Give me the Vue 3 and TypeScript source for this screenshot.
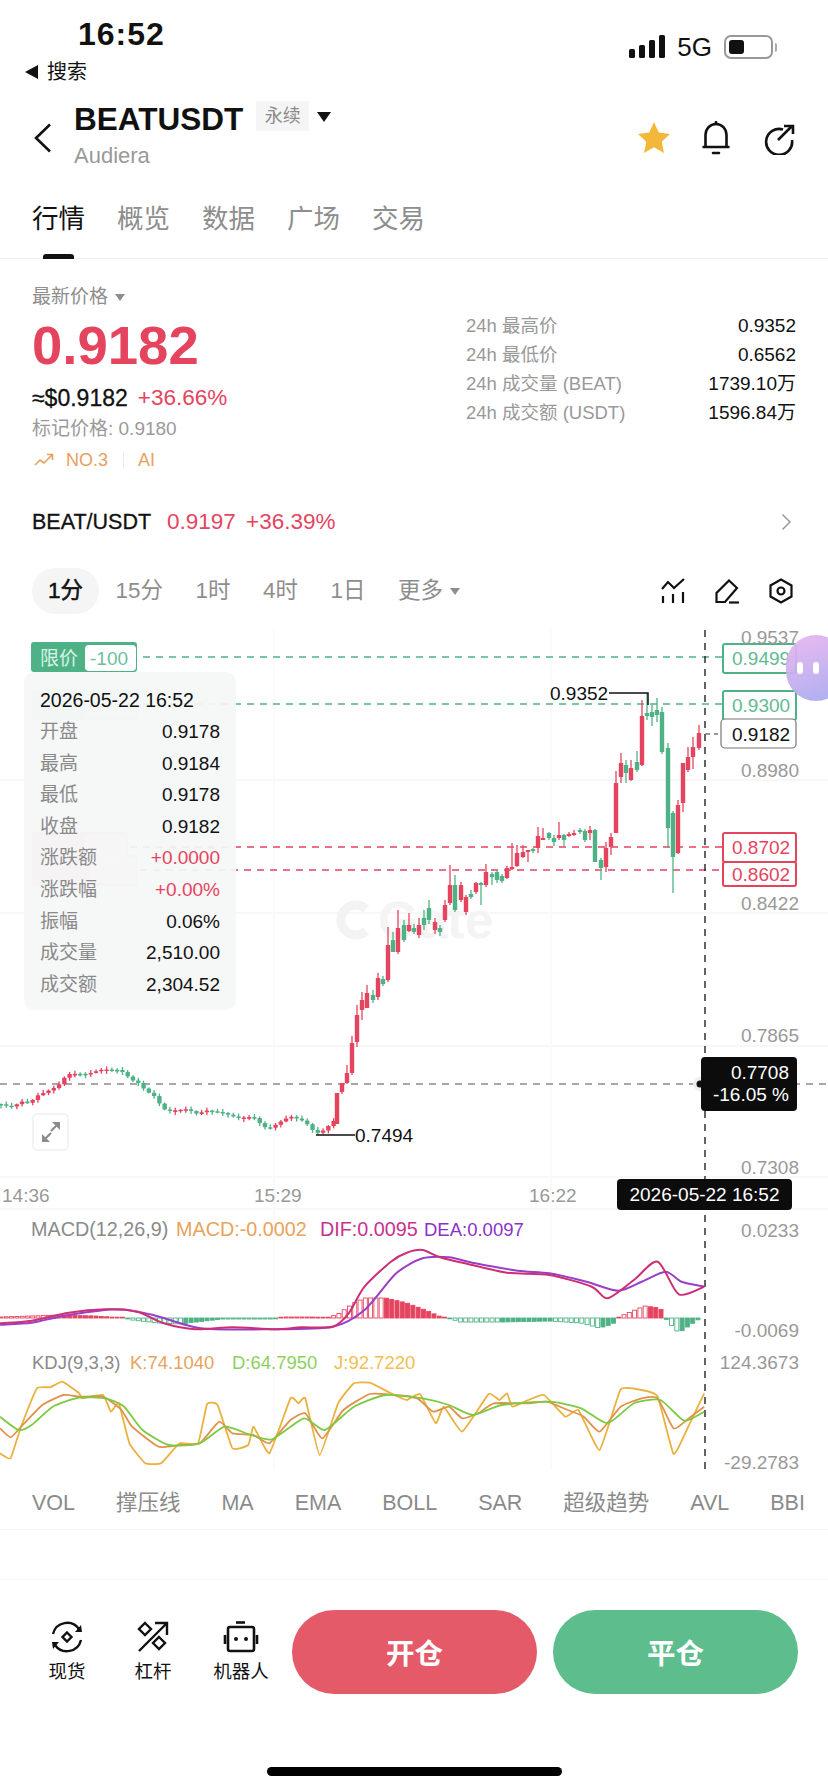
<script setup lang="ts">
type Pt = [number, number]
type Candle = { x: number; top: number; h: number; hi: number; lo: number; up: boolean }

const UP = '#e5445f'
const DOWN = '#4fb286'

const tabs = ['行情', '概览', '数据', '广场', '交易']
const stats = [
  ['24h 最高价', '0.9352'],
  ['24h 最低价', '0.6562'],
  ['24h 成交量 (BEAT)', '1739.10万'],
  ['24h 成交额 (USDT)', '1596.84万'],
]
const frames = ['15分', '1时', '4时', '1日']
const indicators = ['VOL', '撑压线', 'MA', 'EMA', 'BOLL', 'SAR', '超级趋势', 'AVL', 'BBI']
const tipRows = [
  { k: '开盘', v: '0.9178', up: false },
  { k: '最高', v: '0.9184', up: false },
  { k: '最低', v: '0.9178', up: false },
  { k: '收盘', v: '0.9182', up: false },
  { k: '涨跌额', v: '+0.0000', up: true },
  { k: '涨跌幅', v: '+0.00%', up: true },
  { k: '振幅', v: '0.06%', up: false },
  { k: '成交量', v: '2,510.00', up: false },
  { k: '成交额', v: '2,304.52', up: false },
]
const axisLabels: [string, number][] = [
  ['0.9537', 644], ['0.8980', 777], ['0.8422', 910], ['0.7865', 1042], ['0.7308', 1174],
  ['0.0233', 1237], ['-0.0069', 1337], ['124.3673', 1369], ['-29.2783', 1469],
]
const gridY = [780, 913, 1046, 1177, 1209]
const gridX = [274, 551]

function interp(pts: Pt[], x: number): number {
  for (let i = 1; i < pts.length; i++) {
    if (x <= pts[i][0]) {
      const [x0, y0] = pts[i - 1]
      const [x1, y1] = pts[i]
      return y0 + ((y1 - y0) * (x - x0)) / (x1 - x0)
    }
  }
  return pts[pts.length - 1][1]
}

const early: Pt[] = [
  [0, 1104], [10, 1106], [15, 1105], [20, 1100], [30, 1102], [36, 1095], [47, 1091], [57, 1087], [62, 1082],
  [67, 1075], [87, 1075], [103, 1069], [118, 1069], [125, 1072], [130, 1078], [140, 1083], [145, 1090],
  [155, 1097], [160, 1105], [166, 1112], [172, 1112], [187, 1110], [197, 1114], [207, 1110], [220, 1111],
  [238, 1117], [253, 1117], [263, 1127], [268, 1130], [274, 1127], [290, 1117], [305, 1121], [311, 1128],
  [317, 1132], [326, 1128], [332, 1120],
]

// x, open, close, high, low
const traced: [number, number, number, number, number][] = [
  [337, 1124, 1093, 1093, 1124], [342, 1092, 1083, 1083, 1094], [347, 1083, 1073, 1065, 1084],
  [352, 1073, 1043, 1036, 1075], [357, 1042, 1015, 1005, 1047], [362, 1010, 1000, 992, 1020],
  [367, 1008, 993, 985, 1008], [373, 995, 1000, 990, 1003], [378, 997, 978, 973, 1000],
  [383, 979, 984, 976, 986], [388, 980, 945, 927, 982], [393, 940, 952, 932, 952],
  [398, 952, 928, 910, 954], [404, 925, 940, 920, 942], [409, 931, 925, 913, 932],
  [414, 928, 932, 924, 934], [419, 935, 925, 918, 938], [424, 918, 925, 910, 930],
  [429, 908, 920, 900, 924], [435, 930, 922, 918, 934], [440, 928, 932, 925, 936],
  [445, 920, 905, 900, 922], [450, 903, 885, 865, 905], [455, 885, 910, 875, 912],
  [461, 900, 885, 882, 902], [466, 912, 897, 895, 915], [471, 894, 897, 890, 899],
  [476, 892, 883, 882, 894], [481, 883, 885, 882, 905], [486, 885, 872, 864, 887],
  [492, 874, 877, 872, 885], [497, 872, 880, 870, 883], [502, 876, 881, 874, 883],
  [507, 878, 868, 866, 879], [512, 869, 867, 843, 870], [517, 866, 853, 845, 867],
  [523, 857, 852, 845, 858], [528, 852, 850, 850, 862], [533, 849, 851, 848, 853],
  [538, 848, 836, 827, 853], [543, 840, 838, 828, 840], [549, 833, 838, 832, 840],
  [554, 838, 842, 835, 846], [559, 838, 835, 822, 840], [564, 835, 840, 834, 846],
  [569, 836, 834, 832, 837], [574, 834, 833, 830, 836], [580, 830, 832, 828, 834],
  [585, 831, 840, 829, 842], [590, 833, 830, 826, 840], [595, 830, 862, 829, 862],
  [601, 860, 868, 858, 880], [606, 867, 848, 842, 872], [611, 847, 837, 833, 855],
  [616, 833, 783, 771, 833], [621, 777, 763, 753, 783], [626, 765, 773, 760, 783],
  [631, 780, 768, 760, 781], [637, 762, 770, 751, 772], [642, 765, 716, 700, 766],
  [647, 713, 716, 693, 720], [652, 712, 717, 705, 726], [657, 710, 715, 698, 722],
  [662, 712, 752, 707, 754], [668, 748, 828, 743, 848], [673, 813, 857, 811, 893],
  [678, 853, 805, 800, 854], [683, 803, 763, 763, 812], [688, 770, 757, 747, 772],
  [693, 757, 747, 737, 769], [699, 748, 733, 725, 750],
]

function buildCandles(): Candle[] {
  const out: Candle[] = []
  let prev = early[0][1]
  for (let i = 0; i * 5.28 < 334; i++) {
    const x = i * 5.28 + 1
    const c = interp(early, x) + Math.sin(i * 12.9) * 1.2
    const up = c < prev
    const top = Math.min(c, prev)
    const h = Math.max(Math.abs(c - prev), 1.6)
    const w1 = 0.5 + Math.abs(Math.sin(i * 7.3)) * 2.5
    const w2 = 0.5 + Math.abs(Math.cos(i * 4.1)) * 2.5
    out.push({ x, top, h, hi: top - w1, lo: top + h + w2, up })
    prev = c
  }
  for (const [x, o, c, hi, lo] of traced) {
    out.push({ x, top: Math.min(o, c), h: Math.max(Math.abs(o - c), 2), hi, lo, up: c < o })
  }
  return out
}
const candles = buildCandles()

const mapZ = (p: Pt): Pt => [p[0] / 1.893, 1230 + p[1] / 3]
function smooth(raw: Pt[], t = 0.13): string {
  const p = raw.map(mapZ)
  let d = `M${p[0][0].toFixed(1)} ${p[0][1].toFixed(1)}`
  for (let i = 0; i < p.length - 1; i++) {
    const a = p[Math.max(i - 1, 0)]
    const b = p[i]
    const c = p[i + 1]
    const e = p[Math.min(i + 2, p.length - 1)]
    d += `C${(b[0] + (c[0] - a[0]) * t).toFixed(1)} ${(b[1] + (c[1] - a[1]) * t).toFixed(1)} ${(c[0] - (e[0] - b[0]) * t).toFixed(1)} ${(c[1] - (e[1] - b[1]) * t).toFixed(1)} ${c[0].toFixed(1)} ${c[1].toFixed(1)}`
  }
  return d
}

const dif = smooth([[0,280],[60,272],[130,248],[200,238],[260,245],[310,280],[370,298],[440,292],[520,298],[570,292],[630,290],[660,250],[690,170],[740,95],[770,68],[800,60],[830,80],[880,100],[960,128],[1040,135],[1120,170],[1150,205],[1200,150],[1245,95],[1285,193],[1333,170]])
const dea = smooth([[0,284],[60,278],[130,255],[220,238],[290,255],[380,295],[510,298],[630,290],[690,240],[750,130],[800,85],[850,82],[900,100],[980,122],[1040,130],[1110,155],[1170,182],[1215,155],[1260,125],[1290,155],[1333,170]])
const kJ = smooth([[0,670],[20,685],[40,590],[70,475],[95,472],[118,455],[150,490],[155,505],[195,495],[210,545],[225,520],[245,640],[275,700],[305,700],[340,640],[375,640],[392,522],[412,525],[440,655],[470,645],[480,590],[510,670],[550,505],[565,520],[578,505],[605,675],[640,520],[670,460],[700,458],[740,490],[770,510],[795,492],[825,580],[840,530],[875,605],[925,492],[945,510],[960,490],[970,530],[1000,510],[1030,495],[1070,560],[1095,540],[1135,660],[1175,478],[1215,480],[1245,500],[1275,672],[1300,600],[1333,490]], 0.06)
const kK = smooth([[0,595],[20,622],[40,590],[80,525],[120,495],[150,500],[195,500],[230,540],[250,590],[300,650],[340,645],[378,640],[415,575],[440,610],[480,615],[510,640],[550,570],[578,550],[610,625],[650,540],[700,492],[745,495],[790,505],[820,545],[850,530],[875,565],[905,550],[935,520],[1000,520],[1035,515],[1075,540],[1105,560],[1135,605],[1175,530],[1215,505],[1245,505],[1275,595],[1300,570],[1333,530]], 0.08)
const kD = smooth([[0,560],[35,600],[60,585],[100,530],[150,503],[200,505],[235,530],[270,600],[320,645],[378,640],[425,590],[470,612],[515,628],[575,565],[615,600],[670,530],[730,495],[800,505],[850,525],[895,555],[950,525],[1040,515],[1100,535],[1150,580],[1200,520],[1250,510],[1295,572],[1333,545]], 0.1)

const histKeys: Pt[] = [[0,1],[60,2],[110,3],[180,2],[235,0],[250,-2],[300,-5],[340,-6],[420,-1],[520,-1],[540,1],[590,1],[620,0],[640,4],[670,15],[690,20],[730,20],[770,15],[810,7],[830,2],[850,0],[870,-4],[950,-4],[1040,-3],[1100,-5],[1135,-10],[1160,-6],[1170,0],[1180,3],[1220,12],[1250,10],[1258,1],[1265,-4],[1285,-15],[1320,-2],[1333,0]]
const hist = Array.from({ length: 133 }, (_, i) => {
  const x = i * 5.28 + 1
  const v = interp(histKeys, x * 1.893)
  const before = interp(histKeys, (x - 5.28) * 1.893)
  const up = v >= 0
  const hollow = Math.abs(v) >= Math.abs(before)
  const h = Math.max(Math.abs(v), 0.8)
  return { x, y: up ? 1318 - h : 1318, h, up, hollow }
})
</script>

<template>
  <div class="page">
    <div class="status">
      <div class="status-left">
        <div class="clock">16:52</div>
        <div class="back-app"><span class="tri-left"></span>搜索</div>
      </div>
      <div class="status-right">
        <svg width="38" height="24" viewBox="0 0 38 24" fill="#111">
          <rect x="0" y="14" width="6" height="9" rx="1.5" /><rect x="10" y="10" width="6" height="13" rx="1.5" />
          <rect x="20" y="5" width="6" height="18" rx="1.5" /><rect x="30" y="0" width="6" height="23" rx="1.5" />
        </svg>
        <span class="net">5G</span>
        <div class="battery"><span class="battery-fill"></span></div>
        <span class="nub"></span>
      </div>
    </div>

    <header class="head">
      <svg class="back" width="20" height="30" viewBox="0 0 20 30" fill="none" stroke="#111" stroke-width="2.6">
        <path d="M17 1.5 3 15l14 13.5" />
      </svg>
      <div class="title-col">
        <div class="title-row">
          <span class="symbol">BEATUSDT</span><span class="perp">永续</span><span class="tri-down"></span>
        </div>
        <div class="subtitle">Audiera</div>
      </div>
      <div class="head-icons">
        <svg width="34" height="34" viewBox="0 0 34 34" fill="#f3b73c" class="star">
          <path d="M17 1l4.8 10.6 11.2 1.3-8.3 7.8 2.3 11.3L17 26.3 6.999 32l2.3-11.3L1 12.9l11.2-1.3z" />
        </svg>
        <svg width="30" height="34" viewBox="0 0 30 34" fill="none" stroke="#111" stroke-width="2.6" class="bell">
          <path d="M4.500 26V14a10.500 11 0 0 1 21 0v12M1.500 26h27" />
          <path d="M15 3V1M12 32h6" stroke-linecap="round" />
        </svg>
        <svg width="32" height="32" viewBox="0 0 32 32" fill="none" stroke="#111" stroke-width="2.6" class="share">
          <path d="M20 6.500A13 13 0 1 0 29 17" />
          <path d="M15 17 29 3M21 3h9v8" />
        </svg>
      </div>
    </header>

    <nav class="tabs">
      <div v-for="(t, i) in tabs" :key="t" class="tab" :class="{ active: i === 0 }">{{ t }}</div>
    </nav>

    <section class="price">
      <div class="price-left">
        <div class="latest">最新价格<span class="tri-small"></span></div>
        <div class="big">0.9182</div>
        <div class="approx"><span>≈$0.9182</span><span class="up-text pct">+36.66%</span></div>
        <div class="mark">标记价格: 0.9180</div>
        <div class="rank">
          <svg width="20" height="14" viewBox="0 0 20 14" fill="none" stroke="#e8a05f" stroke-width="1.600">
            <path d="M1 12l5-5 4 3 8-8M13 1.500h5.500V7" />
          </svg>
          <span>NO.3</span><i></i><span>AI</span>
        </div>
      </div>
      <div class="stats">
        <div v-for="s in stats" :key="s[0]" class="stat"><span>{{ s[0] }}</span><b>{{ s[1] }}</b></div>
      </div>
    </section>

    <div class="pair">
      <span class="pair-name">BEAT/USDT</span>
      <span class="up-text pair-a">0.9197</span>
      <span class="up-text pair-b">+36.39%</span>
      <svg class="pair-go" width="10" height="18" viewBox="0 0 10 18" fill="none" stroke="#999" stroke-width="1.500">
        <path d="M1.500 1.500 9 9l-7.500 7.500" />
      </svg>
    </div>

    <div class="frames">
      <span class="frame on">1分</span>
      <span v-for="f in frames" :key="f" class="frame">{{ f }}</span>
      <span class="frame more">更多<span class="tri-small"></span></span>
      <div class="tools">
        <svg width="24" height="26" viewBox="0 0 24 26" fill="none" stroke="#111" stroke-width="2.200">
          <path d="M1 11l6-7 6 6L23 1" /><path d="M2 18v7M12 16v9M22 14v11" />
        </svg>
        <svg width="24" height="26" viewBox="0 0 24 26" fill="none" stroke="#111" stroke-width="2.200">
          <path d="M1.500 24V15L14 2.500 22 10 10 24H1.500Z" /><path d="M14 24.500h10" />
        </svg>
        <svg width="24" height="26" viewBox="0 0 24 26" fill="none" stroke="#111" stroke-width="2.200">
          <path d="M12 1.500 22.500 7.500v11L12 24.500 1.500 18.500v-11z" /><circle cx="12" cy="13" r="3.500" />
        </svg>
      </div>
    </div>

    <div class="chart">
      <svg class="plot" width="828" height="860" viewBox="0 620 828 860">
        <line v-for="y in gridY" :key="y" x1="0" x2="828" :y1="y" :y2="y" stroke="#f5f5f5" stroke-width="1.500" />
        <line v-for="x in gridX" :key="x" :x1="x" :x2="x" y1="630" y2="1470" stroke="#f8f8f8" stroke-width="1.500" />
        <path d="M366 909A15 15 0 1 0 366 931" fill="none" stroke="#f3f3f3" stroke-width="9" />
        <text class="mark-text" x="378" y="938">Gate</text>

        <line x1="143" x2="722" y1="657" y2="657" stroke="#4fb286" stroke-dasharray="7 6" stroke-width="1.400" />
        <line x1="143" x2="722" y1="704" y2="704" stroke="#4fb286" stroke-dasharray="7 6" stroke-width="1.400" />
        <line x1="130" x2="722" y1="847" y2="847" :stroke="UP" stroke-dasharray="7 6" stroke-width="1.400" />
        <line x1="140" x2="722" y1="870" y2="870" :stroke="UP" stroke-dasharray="7 6" stroke-width="1.400" />
        <line x1="0" x2="828" y1="1084" y2="1084" stroke="#8a8a8a" stroke-dasharray="7 6" stroke-width="1.400" />
        <line x1="705" x2="705" y1="630" y2="1470" stroke="#222" stroke-dasharray="7 6" stroke-width="1.400" />
        <line x1="705" x2="718" y1="734" y2="734" stroke="#777" stroke-dasharray="5 4" stroke-width="1.400" />

        <g v-for="(c, i) in candles" :key="i">
          <line :x1="c.x" :x2="c.x" :y1="c.hi" :y2="c.lo" :stroke="c.up ? UP : DOWN" stroke-width="1.300" />
          <rect :x="c.x - 2.200" :y="c.top" width="4.400" :height="c.h" :fill="c.up ? UP : DOWN" rx="0.600" />
        </g>

        <path d="M609 693H648V705M316 1135H355" fill="none" stroke="#111" stroke-width="1.500" />
        <text class="hl" x="550" y="700">0.9352</text>
        <text class="hl" x="355" y="1142">0.7494</text>

        <g fill="#fff" stroke-width="2">
          <rect x="723" y="644" width="73" height="29" rx="2" stroke="#4fb286" />
          <rect x="723" y="691" width="73" height="29" rx="2" stroke="#4fb286" />
          <rect x="723" y="833" width="73" height="29" rx="2" :stroke="UP" />
          <rect x="723" y="862" width="73" height="24" rx="2" :stroke="UP" />
        </g>
        <text class="box-g" x="732" y="665">0.9499</text>
        <text class="box-g" x="732" y="712">0.9300</text>
        <text class="box-r" x="732" y="854">0.8702</text>
        <text class="box-r" x="732" y="881">0.8602</text>
        <rect x="721" y="719" width="75" height="29" rx="4" fill="#fff" stroke="#777" stroke-width="1.200" />
        <text class="box-k" x="732" y="741">0.9182</text>

        <text v-for="a in axisLabels" :key="a[0]" class="axis" x="799" :y="a[1]" text-anchor="end">{{ a[0] }}</text>

        <text class="axis" x="2" y="1202">14:36</text>
        <text class="axis" x="254" y="1202">15:29</text>
        <text class="axis" x="529" y="1202">16:22</text>

        <g v-for="(b, i) in hist" :key="'h' + i">
          <rect :x="b.x - 2" :y="b.y" width="4" :height="b.h" :fill="b.hollow ? '#fff' : (b.up ? UP : DOWN)" :stroke="b.up ? UP : DOWN" stroke-width="0.900" />
        </g>
        <path :d="dea" fill="none" stroke="#9a3ec8" stroke-width="2" />
        <path :d="dif" fill="none" stroke="#cc2f75" stroke-width="2" />

        <path :d="kJ" fill="none" stroke="#eab13e" stroke-width="1.800" />
        <path :d="kK" fill="none" stroke="#e0924a" stroke-width="1.800" />
        <path :d="kD" fill="none" stroke="#7dc940" stroke-width="1.800" />

        <text class="lg-big" x="31" y="1236" fill="#8a8a8a">MACD(12,26,9)</text>
        <text class="lg-big" x="176" y="1236" fill="#e8a35c">MACD:-0.0002</text>
        <text class="lg-big" x="320" y="1236" fill="#c8328c">DIF:0.0095</text>
        <text class="lg" x="424" y="1236" fill="#8a32c8">DEA:0.0097</text>
        <text class="lg" x="32" y="1369" fill="#8a8a8a">KDJ(9,3,3)</text>
        <text class="lg" x="130" y="1369" fill="#e8a35c">K:74.1040</text>
        <text class="lg" x="232" y="1369" fill="#8dd060">D:64.7950</text>
        <text class="lg" x="334" y="1369" fill="#f0c050">J:92.7220</text>

        <g opacity="0.28">
          <rect x="32" y="690" width="105" height="30" rx="3" fill="#4fb286" />
          <rect x="32" y="832" width="96" height="30" rx="3" fill="#e5445f" />
          <rect x="32" y="855" width="105" height="31" rx="3" fill="#e5445f" />
        </g>
        <rect x="85" y="693" width="51" height="25" rx="4" fill="#fff" opacity="0.6" />
        <rect x="85" y="835" width="42" height="24" rx="4" fill="#fff" opacity="0.6" />
        <rect x="90" y="858" width="46" height="25" rx="4" fill="#fff" opacity="0.6" />

        <rect x="31" y="642" width="106" height="30" rx="3" fill="#4fb286" />
        <rect x="85" y="645" width="51" height="26" rx="4" fill="#fff" />
        <text class="tag-a" x="40" y="665">限价</text>
        <text class="tag-b" x="90" y="665">-100</text>

        <g transform="translate(33 1114)">
          <rect width="35" height="36" rx="4" fill="#fff" stroke="#f0f0f0" stroke-width="1.500" />
          <path d="M10 27 18 19M18 17 26 9" stroke="#8c8c8c" stroke-width="2.200" fill="none" />
          <path d="M9 20v8h8zM27 16V8h-8z" fill="#8c8c8c" />
        </g>

        <circle cx="700" cy="1084" r="7" fill="#eee" />
        <circle cx="700" cy="1084" r="3.500" fill="#111" />
      </svg>

      <div class="tip">
        <div class="tip-date">2026-05-22 16:52</div>
        <div v-for="r in tipRows" :key="r.k" class="tip-row">
          <span>{{ r.k }}</span><b :class="{ 'up-text': r.up }">{{ r.v }}</b>
        </div>
      </div>

      <div class="price-flag"><span>0.7708</span><span>-16.05 %</span></div>
      <div class="time-flag">2026-05-22 16:52</div>
      <div class="float"><i></i><i></i></div>
    </div>

    <div class="inds">
      <span v-for="n in indicators" :key="n">{{ n }}</span>
    </div>

    <footer class="foot">
      <div class="shortcuts">
        <div class="sc">
          <svg width="34" height="34" viewBox="0 0 34 34" fill="none" stroke="#111" stroke-width="2.400">
            <path d="M3 14A14.500 14.500 0 0 1 29 9M31 20A14.500 14.500 0 0 1 5 25" />
            <path d="M25 12h7l-1-7zM9 22H2l1 7z" fill="#111" stroke="none" />
            <path d="M17 12.500 21.500 17 17 21.500 12.500 17z" />
          </svg>
          <span>现货</span>
        </div>
        <div class="sc">
          <svg width="34" height="34" viewBox="0 0 34 34" fill="none" stroke="#111" stroke-width="2.400">
            <path d="M3 31 30 4M19 3h12v12" />
            <path d="M9 3l6 6-6 6-6-6zM23 17l6 6-6 6-6-6z" />
          </svg>
          <span>杠杆</span>
        </div>
        <div class="sc">
          <svg width="36" height="34" viewBox="0 0 36 34" fill="none" stroke="#111" stroke-width="2.600">
            <path d="M13 2.500h9" />
            <rect x="5" y="7" width="26" height="24" rx="2" />
            <path d="M2 15v9M34 15v9" />
            <circle cx="13" cy="19" r="2" fill="#111" stroke="none" /><circle cx="23" cy="19" r="2" fill="#111" stroke="none" />
          </svg>
          <span>机器人</span>
        </div>
      </div>
      <button class="act open">开仓</button>
      <button class="act close">平仓</button>
    </footer>
    <div class="home"></div>
  </div>
</template>

<style>
html, body { margin: 0; background: #fff; }
</style>

<style scoped>
.page {
  width: 828px; height: 1792px; overflow: hidden; position: relative; background: #fff; color: #111;
  font-family: "Liberation Sans", "Noto Sans CJK SC", sans-serif;
}
.status { height: 92px; display: flex; justify-content: space-between; }
.status-left { padding-left: 25px; }
.clock { font-size: 32px; font-weight: 700; letter-spacing: 1px; margin: 15px 0 0 53px; line-height: 38px; }
.back-app { display: flex; align-items: center; font-size: 20px; line-height: 28px; margin-top: 5px; gap: 9px; }
.tri-left { width: 0; height: 0; border: 7px solid transparent; border-right: 13px solid #111; border-left: 0; }
.status-right { display: flex; align-items: flex-start; padding: 35px 51px 0 0; }
.net { font-size: 26px; line-height: 25px; margin-left: 10px; }
.battery { width: 49px; height: 24px; border: 2px solid #999; border-radius: 7px; box-sizing: border-box; margin-left: 12px; padding: 3px; }
.battery-fill { display: block; width: 15px; height: 14px; background: #111; border-radius: 3px; }
.nub { width: 2px; height: 9px; margin: 8px 0 0 2px; background: #aaa; border-radius: 0 2px 2px 0; }

.head { height: 80px; display: flex; align-items: flex-start; position: relative; }
.back { margin: 31px 0 0 33px; }
.title-col { margin-left: 21px; }
.title-row { display: flex; align-items: center; height: 42px; margin-top: 6px; }
.symbol { font-size: 31.500px; font-weight: 700; line-height: 42px; }
.perp { margin-left: 13px; width: 53px; height: 30px; line-height: 30px; text-align: center; background: #f5f5f5; font-size: 18px; color: #8b8b8b; border-radius: 2px; position: relative; top: -3px; }
.tri-down { width: 0; height: 0; margin-left: 8px; border: 7.500px solid transparent; border-top: 10px solid #111; border-bottom: 0; position: relative; top: -2px; }
.subtitle { font-size: 22px; line-height: 28px; color: #999; margin-top: 2px; }
.head-icons { margin-left: auto; display: flex; align-items: flex-start; padding-right: 33px; }
.star { margin-top: 29px; }
.bell { margin: 29px 0 0 30px; }
.share { margin: 31px 0 0 32px; }

.tabs { height: 87px; border-bottom: 1px solid #f0f0f0; box-sizing: border-box; display: flex; gap: 32px; padding-left: 32px; }
.tab { font-size: 26.500px; line-height: 36px; padding-top: 29px; color: #8e8e8e; position: relative; height: 87px; box-sizing: border-box; }
.tab.active { color: #111; }
.tab.active::after { content: ""; position: absolute; left: 11px; right: 11px; bottom: 0; height: 5px; background: #111; border-radius: 3px 3px 0 0; }

.price { display: flex; height: 243px; }
.price-left { padding: 27px 0 0 32px; }
.latest { font-size: 19px; line-height: 22px; color: #8e8e8e; display: flex; align-items: center; }
.tri-small { width: 0; height: 0; margin-left: 7px; border: 5.500px solid transparent; border-top: 7px solid #8e8e8e; border-bottom: 0; display: inline-block; }
.big { font-size: 54.500px; font-weight: 700; line-height: 60px; margin-top: 8px; color: #e5445f; }
.approx { display: flex; gap: 10px; font-size: 23px; line-height: 28px; margin-top: 8px; }
.approx span:first-child { -webkit-text-stroke: 0.3px #111; }
.pct { font-size: 22.500px; }
.up-text { color: #e5445f; }
.mark { font-size: 19px; line-height: 24px; color: #9a9a9a; margin-top: 5px; }
.rank { display: flex; align-items: center; height: 24px; margin-top: 7px; font-size: 18px; color: #e8a05f; }
.rank svg { margin: 0 12px 0 2px; }
.rank i { width: 1px; height: 17px; background: #f2ece6; margin: 0 14px 0 15px; }
.stats { margin-left: auto; width: 330px; padding: 52px 32px 0 0; }
.stat { display: flex; justify-content: space-between; height: 29px; line-height: 29px; font-size: 18.500px; color: #999; }
.stat b { font-weight: 400; color: #111; font-size: 19px; }

.pair { height: 40px; display: flex; align-items: center; padding: 0 37px 0 32px; font-size: 22.500px; line-height: 28px; }
.pair-name { -webkit-text-stroke: 0.3px #111; width: 135px; font-size: 21.500px; }
.pair-a { width: 79px; }
.pair-go { margin-left: auto; }

.frames { margin-top: 26px; height: 46px; padding-left: 32px; display: flex; align-items: center; font-size: 22.500px; line-height: 28px; color: #8e8e8e; }
.frame { display: flex; align-items: center; margin-left: 32.500px; white-space: nowrap; }
.frame.on { background: #f5f5f5; color: #111; border-radius: 23px; height: 46px; padding: 0 16px; margin: 0 -16px 0 0; -webkit-text-stroke: 0.5px #111; }
.tools { margin-left: auto; display: flex; gap: 30px; padding-right: 35px; }

.chart { position: relative; margin-top: 6px; height: 860px; }
.plot { position: absolute; left: 0; top: 0; display: block; }
.mark-text { font-size: 52px; font-weight: 700; fill: #f4f4f4; }
.axis { font-size: 19px; fill: #999; }
.hl { font-size: 19px; fill: #111; }
.box-g { font-size: 19px; fill: #62ba94; }
.box-r { font-size: 19px; fill: #e5445f; }
.box-k { font-size: 19px; fill: #111; }
.lg { font-size: 18.500px; }
.lg-big { font-size: 19.800px; }
.tag-a { font-size: 19px; fill: #d8f3e6; }
.tag-b { font-size: 19px; fill: #6cbf9b; }

.tip { position: absolute; left: 24px; top: 52px; width: 212px; height: 338px; box-sizing: border-box; padding: 12px 16px 0; background: rgba(245, 246, 246, 0.92); border-radius: 10px; }
.tip-date { font-size: 19.500px; line-height: 32px; }
.tip-row { display: flex; justify-content: space-between; height: 31.600px; line-height: 31.600px; font-size: 19px; color: #8a8a8a; }
.tip-row b { font-weight: 400; color: #111; }
.tip-row b.up-text { color: #e5445f; }

.price-flag { position: absolute; left: 701px; top: 437px; width: 96px; height: 54px; box-sizing: border-box; padding: 5px 8px 0 0; background: #0c0c0c; border-radius: 4px; color: #fff; font-size: 19px; line-height: 22px; display: flex; flex-direction: column; align-items: flex-end; }
.time-flag { position: absolute; left: 617px; top: 559px; width: 175px; height: 31px; line-height: 31px; background: #0c0c0c; border-radius: 4px; color: #fff; font-size: 19px; text-align: center; }
.float { position: absolute; left: 786px; top: 15px; width: 60px; height: 66px; border-radius: 33px; background: linear-gradient(160deg, rgba(233, 180, 238, 0.92), rgba(164, 168, 240, 0.92)); display: flex; gap: 10px; padding: 27px 0 0 11px; box-sizing: border-box; }
.float i { width: 6px; height: 12px; background: #fff; border-radius: 3px; }

.inds { height: 50px; padding: 0 23px 4px 32px; box-sizing: border-box; border-bottom: 1px solid #f6f6f6; display: flex; justify-content: space-between; align-items: center; font-size: 21.500px; line-height: 28px; color: #8a8a8a; }

.foot { margin-top: 49px; height: 188px; border-top: 1px solid #f6f6f6; box-sizing: border-box; display: flex; align-items: flex-start; padding-top: 30px; }
.shortcuts { width: 292px; display: flex; padding: 10px 0 0 47px; box-sizing: border-box; }
.sc { display: flex; flex-direction: column; align-items: center; font-size: 18.500px; line-height: 24px; }
.sc:nth-child(1) { width: 40px; }
.sc:nth-child(2) { width: 40px; margin-left: 46px; }
.sc:nth-child(3) { width: 56px; margin-left: 40px; }
.sc svg { margin-bottom: 6px; }
.act { width: 245px; height: 84px; border: 0; padding: 3px 0 0; border-radius: 42px; color: #fff; font: 700 28.500px/36px "Liberation Sans", "Noto Sans CJK SC", sans-serif; }
.open { background: #e55a69; }
.close { background: #5dbd8d; margin-left: 16px; }
.home { position: absolute; left: 267px; top: 1767px; width: 295px; height: 9px; background: #000; border-radius: 5px; }
</style>
